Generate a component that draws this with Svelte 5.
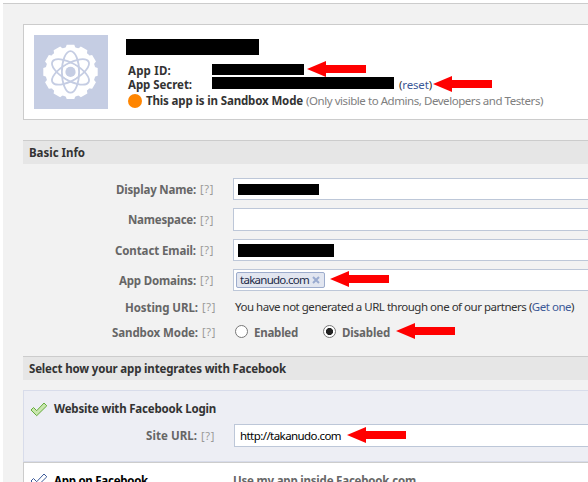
<script>
  const arrows = [
    { x: 307, y: 61 },
    { x: 433, y: 76 },
    { x: 330, y: 271 },
    { x: 396, y: 323 },
    { x: 347, y: 427 }
  ];
  const fields = [
    { label: 'Display Name:', width: 80, height: 22, gap: 8, redact: 81, bar: 11 },
    { label: 'Namespace:', width: 68, height: 23, gap: 8, redact: 0, bar: 0 },
    { label: 'Contact Email:', width: 81, height: 22, gap: 8, redact: 96, bar: 13 },
    { label: 'App Domains:', width: 77, height: 22, gap: 9, chip: 'takanudo.com' }
  ];
  const teeth = Array.from({ length: 12 }, (_, i) => i * 30);

  function fit(node, width) {
    const natural = node.getBoundingClientRect().width;
    const count = node.textContent.length;
    node.style.letterSpacing = `${(width - natural) / count}px`;
  }
</script>

<div class="page">
  <main>
    <section class="card">
      <svg class="logo" viewBox="0 0 74 74">
        <rect width="74" height="74" fill="#c5cde3" />
        <g transform="translate(36.5 36.9)">
          <circle r="25" fill="#fff" />
          {#each teeth as angle}
            <path d="M-5.2-23.5-3.8-27.2H3.8L5.2-23.5Z" fill="#fff" transform="rotate({angle})" />
          {/each}
          <g fill="none" stroke="#c5cde3" stroke-width="1.8">
            <ellipse rx="8.6" ry="20.8" />
            <ellipse rx="8.6" ry="20.8" transform="rotate(60)" />
            <ellipse rx="8.6" ry="20.8" transform="rotate(120)" />
          </g>
          <circle r="7.6" fill="#fff" />
          <circle r="5.1" fill="#c5cde3" />
        </g>
      </svg>
      <div class="details">
        <div class="bar title"></div>
        <div class="line id"><b class="key"><span use:fit={43}>App ID:</span></b><i class="bar short"></i></div>
        <div class="line secret">
          <b class="key"><span use:fit={64}>App Secret:</span></b><i class="bar long"></i>
          <span class="reset"><span use:fit={33}>(<a>reset</a>)</span></span>
        </div>
        <div class="line mode">
          <i class="dot"></i><b><span use:fit={157}>This app is in Sandbox Mode</span></b>
          <span class="note"><span use:fit={237}>(Only visible to Admins, Developers and Testers)</span></span>
        </div>
      </div>
    </section>

    <h2 class="basic"><span use:fit={56}>Basic Info</span></h2>
    <div class="fields">
      {#each fields as f}
        <div class="row" style:height="{f.height}px" style:margin-bottom="{f.gap}px">
          <label><span use:fit={f.width}>{f.label}</span></label>
          <span class="help"><span use:fit={14}>[?]</span></span>
          <div class="input">
            {#if f.redact}
              <i class="bar" style:width="{f.redact}px" style:height="{f.bar}px"></i>
            {:else if f.chip}
              <span class="chip"><span use:fit={69}>{f.chip}</span>
                <svg width="8" height="8" viewBox="0 0 8 8"><path d="M1 1 7 7M7 1 1 7" stroke="#9aabd0" stroke-width="2" /></svg>
              </span>
            {/if}
          </div>
        </div>
      {/each}
      <div class="row plain hosting">
        <label><span use:fit={73}>Hosting URL:</span></label>
        <span class="help"><span use:fit={14}>[?]</span></span>
        <span class="text"><span use:fit={339}>You have not generated a URL through one of our partners (<a>Get one</a>)</span></span>
      </div>
      <div class="row plain sandbox">
        <label><span use:fit={86}>Sandbox Mode:</span></label>
        <span class="help"><span use:fit={14}>[?]</span></span>
        <span class="radio"></span><b class="option first"><span use:fit={44}>Enabled</span></b>
        <span class="radio on"></span><b class="option"><span use:fit={48}>Disabled</span></b>
      </div>
    </div>

    <h2 class="select"><span use:fit={257}>Select how your app integrates with Facebook</span></h2>
    <section class="website">
      <h3>
        <svg width="18" height="15" viewBox="0 0 18 15"><path d="M1 8 3.5 5.5 6.7 8.7 14 1 16.8 3.8 6.7 13.7Z" fill="#c9e6ae" stroke="#65ac3c" /></svg>
        <span use:fit={162}>Website with Facebook Login</span>
      </h3>
      <div class="row site">
        <label><span use:fit={51}>Site URL:</span></label>
        <span class="help"><span use:fit={14}>[?]</span></span>
        <div class="input url"><span use:fit={101}>http://takanudo.com</span></div>
      </div>
    </section>
    <section class="canvas">
      <svg width="18" height="15" viewBox="0 0 18 15"><path d="M1 8 3.5 5.5 6.7 8.7 14 1 16.8 3.8 6.7 13.7Z" fill="#fff" stroke="#3b5998" /></svg>
      <b class="name"><span use:fit={94}>App on Facebook</span></b>
      <b class="about"><span use:fit={183}>Use my app inside Facebook.com</span></b>
    </section>
  </main>

  {#each arrows as a}
    <svg class="arrow" style:left="{a.x}px" style:top="{a.y}px" width="60" height="16" viewBox="0 0 60 16">
      <path d="M0 8 19 0V4H59V12H19V16Z" fill="#f00" />
    </svg>
  {/each}
</div>

<style>
  .page {
    position: relative;
    box-sizing: border-box;
    width: 588px;
    height: 482px;
    padding: 3px 0 0 3px;
    overflow: hidden;
    background: #fff;
    color: #333;
    font: 11.5px/16px "Noto Sans", sans-serif;
    white-space: nowrap;
  }
  main {
    box-sizing: border-box;
    height: 479px;
    padding: 20px 0 0 20px;
    border-top: 1px solid #ccc;
    background: #f2f2f2;
  }
  svg { display: block; flex: none; }
  a { color: #3b5998; }
  b, h2, h3, label { font-weight: 700; font-size: 11.5px; }
  .bar { display: block; background: #000; flex: none; }
  .card {
    box-sizing: border-box;
    display: flex;
    height: 96px;
    padding: 10px;
    border: 1px solid #ccc;
    border-right: 0;
    background: #fff;
  }
  .logo { width: 74px; height: 74px; }
  .details { padding: 4px 0 0 18px; }
  .title { width: 133px; height: 16px; }
  .line { display: flex; padding-left: 2px; }
  .id { height: 14px; margin-top: 7px; }
  .key { width: 84px; }
  .id .key { padding-top: 1px; }
  .short { width: 92px; height: 11px; margin-top: 2px; }
  .long { width: 182px; height: 12px; margin-top: 1px; }
  .secret { height: 17px; }
  .secret .key, .reset { padding-top: 1px; }
  .reset { margin-left: 5px; }
  .dot { width: 14px; height: 14px; margin: 1px 4px 0 0; border-radius: 50%; background: #ff8500; }
  .mode .dot { margin-left: 0; }
  .note { margin-left: 3px; color: #808080; }
  h2 {
    box-sizing: border-box;
    height: 24px;
    margin: 20px 0 0;
    padding: 4px 0 0 6px;
    border-top: 1px solid #ccc;
    background: #e6e6e6;
  }
  .fields { height: 192px; padding-top: 14px; box-sizing: border-box; }
  .row { display: flex; align-items: center; }
  label { width: 173px; padding-top: 1px; text-align: right; color: #666; flex: none; }
  .help { width: 37px; padding-left: 4px; box-sizing: border-box; color: #999; font-size: 11px; flex: none; }
  .input {
    box-sizing: border-box;
    display: flex;
    align-items: center;
    align-self: stretch;
    flex: 1;
    padding-left: 4px;
    border: 1px solid #bdc7d8;
    border-right: 0;
    background: #fff;
  }
  .chip {
    box-sizing: border-box;
    display: flex;
    align-items: center;
    gap: 3px;
    width: 89px;
    height: 16px;
    margin-left: -2px;
    padding: 0 3px;
    border: 1px solid #9daccc;
    border-radius: 2px;
    background: #e2e6f0;
    color: #1c2a47;
  }
  .plain label { width: 175px; }
  .hosting { height: 18px; margin-top: -2px; }
  .sandbox { height: 16px; margin-top: 8px; }
  .radio {
    box-sizing: border-box;
    width: 13px;
    height: 13px;
    margin-top: -2px;
    border: 1px solid #777;
    border-radius: 50%;
    background: #fff;
  }
  .radio.on { background: radial-gradient(circle, #222 3.2px, #fff 3.9px); }
  .option { margin-left: 6px; padding-top: 1px; color: #666; }
  .first { margin-right: 25px; }
  h2.select { margin: 0; }
  .website {
    box-sizing: border-box;
    height: 72px;
    margin-top: 10px;
    border: 1px solid #d8dcea;
    border-right: 0;
    background: #edeef4;
  }
  h3 { display: flex; align-items: center; gap: 6px; height: 16px; margin: 0; padding: 10px 0 0 6px; }
  .site { height: 23px; margin-top: 7px; }
  .url { padding-left: 5px; color: #000; }
  .canvas {
    display: flex;
    box-sizing: border-box;
    height: 30px;
    padding: 10px 0 0 6px;
    border: 1px solid #ccc;
    border-right: 0;
    background: #fff;
    color: #000;
  }
  .name { width: 180px; margin-left: 6px; }
  .canvas .about { margin-left: -1px; }
  .about { color: #666; }
  .arrow { position: absolute; }
</style>
